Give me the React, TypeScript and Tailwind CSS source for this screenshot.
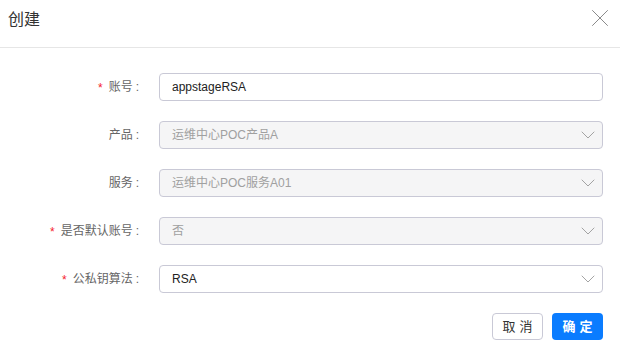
import { ChevronDown, X } from 'lucide-react';

const rows = [
    { label: '账号', required: true, value: 'appstageRSA', disabled: false, select: false },
    { label: '产品', required: false, value: '运维中心POC产品A', disabled: true, select: true },
    { label: '服务', required: false, value: '运维中心POC服务A01', disabled: true, select: true },
    { label: '是否默认账号', required: true, value: '否', disabled: true, select: true },
    { label: '公私钥算法', required: true, value: 'RSA', disabled: false, select: true },
];

export default function App() {
    return (
        <div
            className="w-[620px] h-[352px] bg-white overflow-hidden"
            style={{ fontFamily: '"Liberation Sans", "Noto Sans CJK SC", sans-serif' }}
        >
            <div className="h-[48px] border-b border-[#e6e6e6] flex items-start justify-between pl-[8px] pr-[5px]">
                <h2 className="text-[16px] leading-[24px] text-[#333] mt-[8px]">创建</h2>
                <X className="w-[30px] h-[30px] text-[#8a8a8a] mt-[3px]" strokeWidth={0.8} />
            </div>

            <div className="pt-[25px] pr-[17px] flex flex-col gap-[20px]">
                {rows.map((row) => (
                    <div key={row.label} className="flex items-center h-[28px]">
                        <label className="w-[139px] text-[12px] text-[#666] flex items-center justify-end">
                            {row.required && <span className="text-[#f5222d] text-[12px] mr-[6px] mt-[2px]">*</span>}
                            <span>{row.label}</span>
                            <span className="ml-[3px]">:</span>
                        </label>
                        <div
                            className={`ml-[20px] flex-1 h-[28px] rounded-[4px] border border-[#c9c9d6] flex items-center justify-between pl-[12px] pr-[2px] text-[12px] ${
                                row.disabled ? 'bg-[#f5f5f6] text-[#a0a0a0]' : 'bg-white text-[#222]'
                            }`}
                        >
                            <span>{row.value}</span>
                            {row.select && <ChevronDown className="w-[24px] h-[24px] text-[#9a9a9a]" strokeWidth={0.9} />}
                        </div>
                    </div>
                ))}

                <div className="flex justify-end gap-[9px]">
                    <button className="w-[51px] h-[27px] rounded-[4px] border border-[#c9c9d6] bg-white text-[13px] text-[#333] tracking-[4px] pl-[4px]">
                        取消
                    </button>
                    <button className="w-[51px] h-[27px] rounded-[4px] bg-[#0a7cff] text-[13px] text-white font-bold tracking-[4px] pl-[4px]">
                        确定
                    </button>
                </div>
            </div>
        </div>
    );
}
